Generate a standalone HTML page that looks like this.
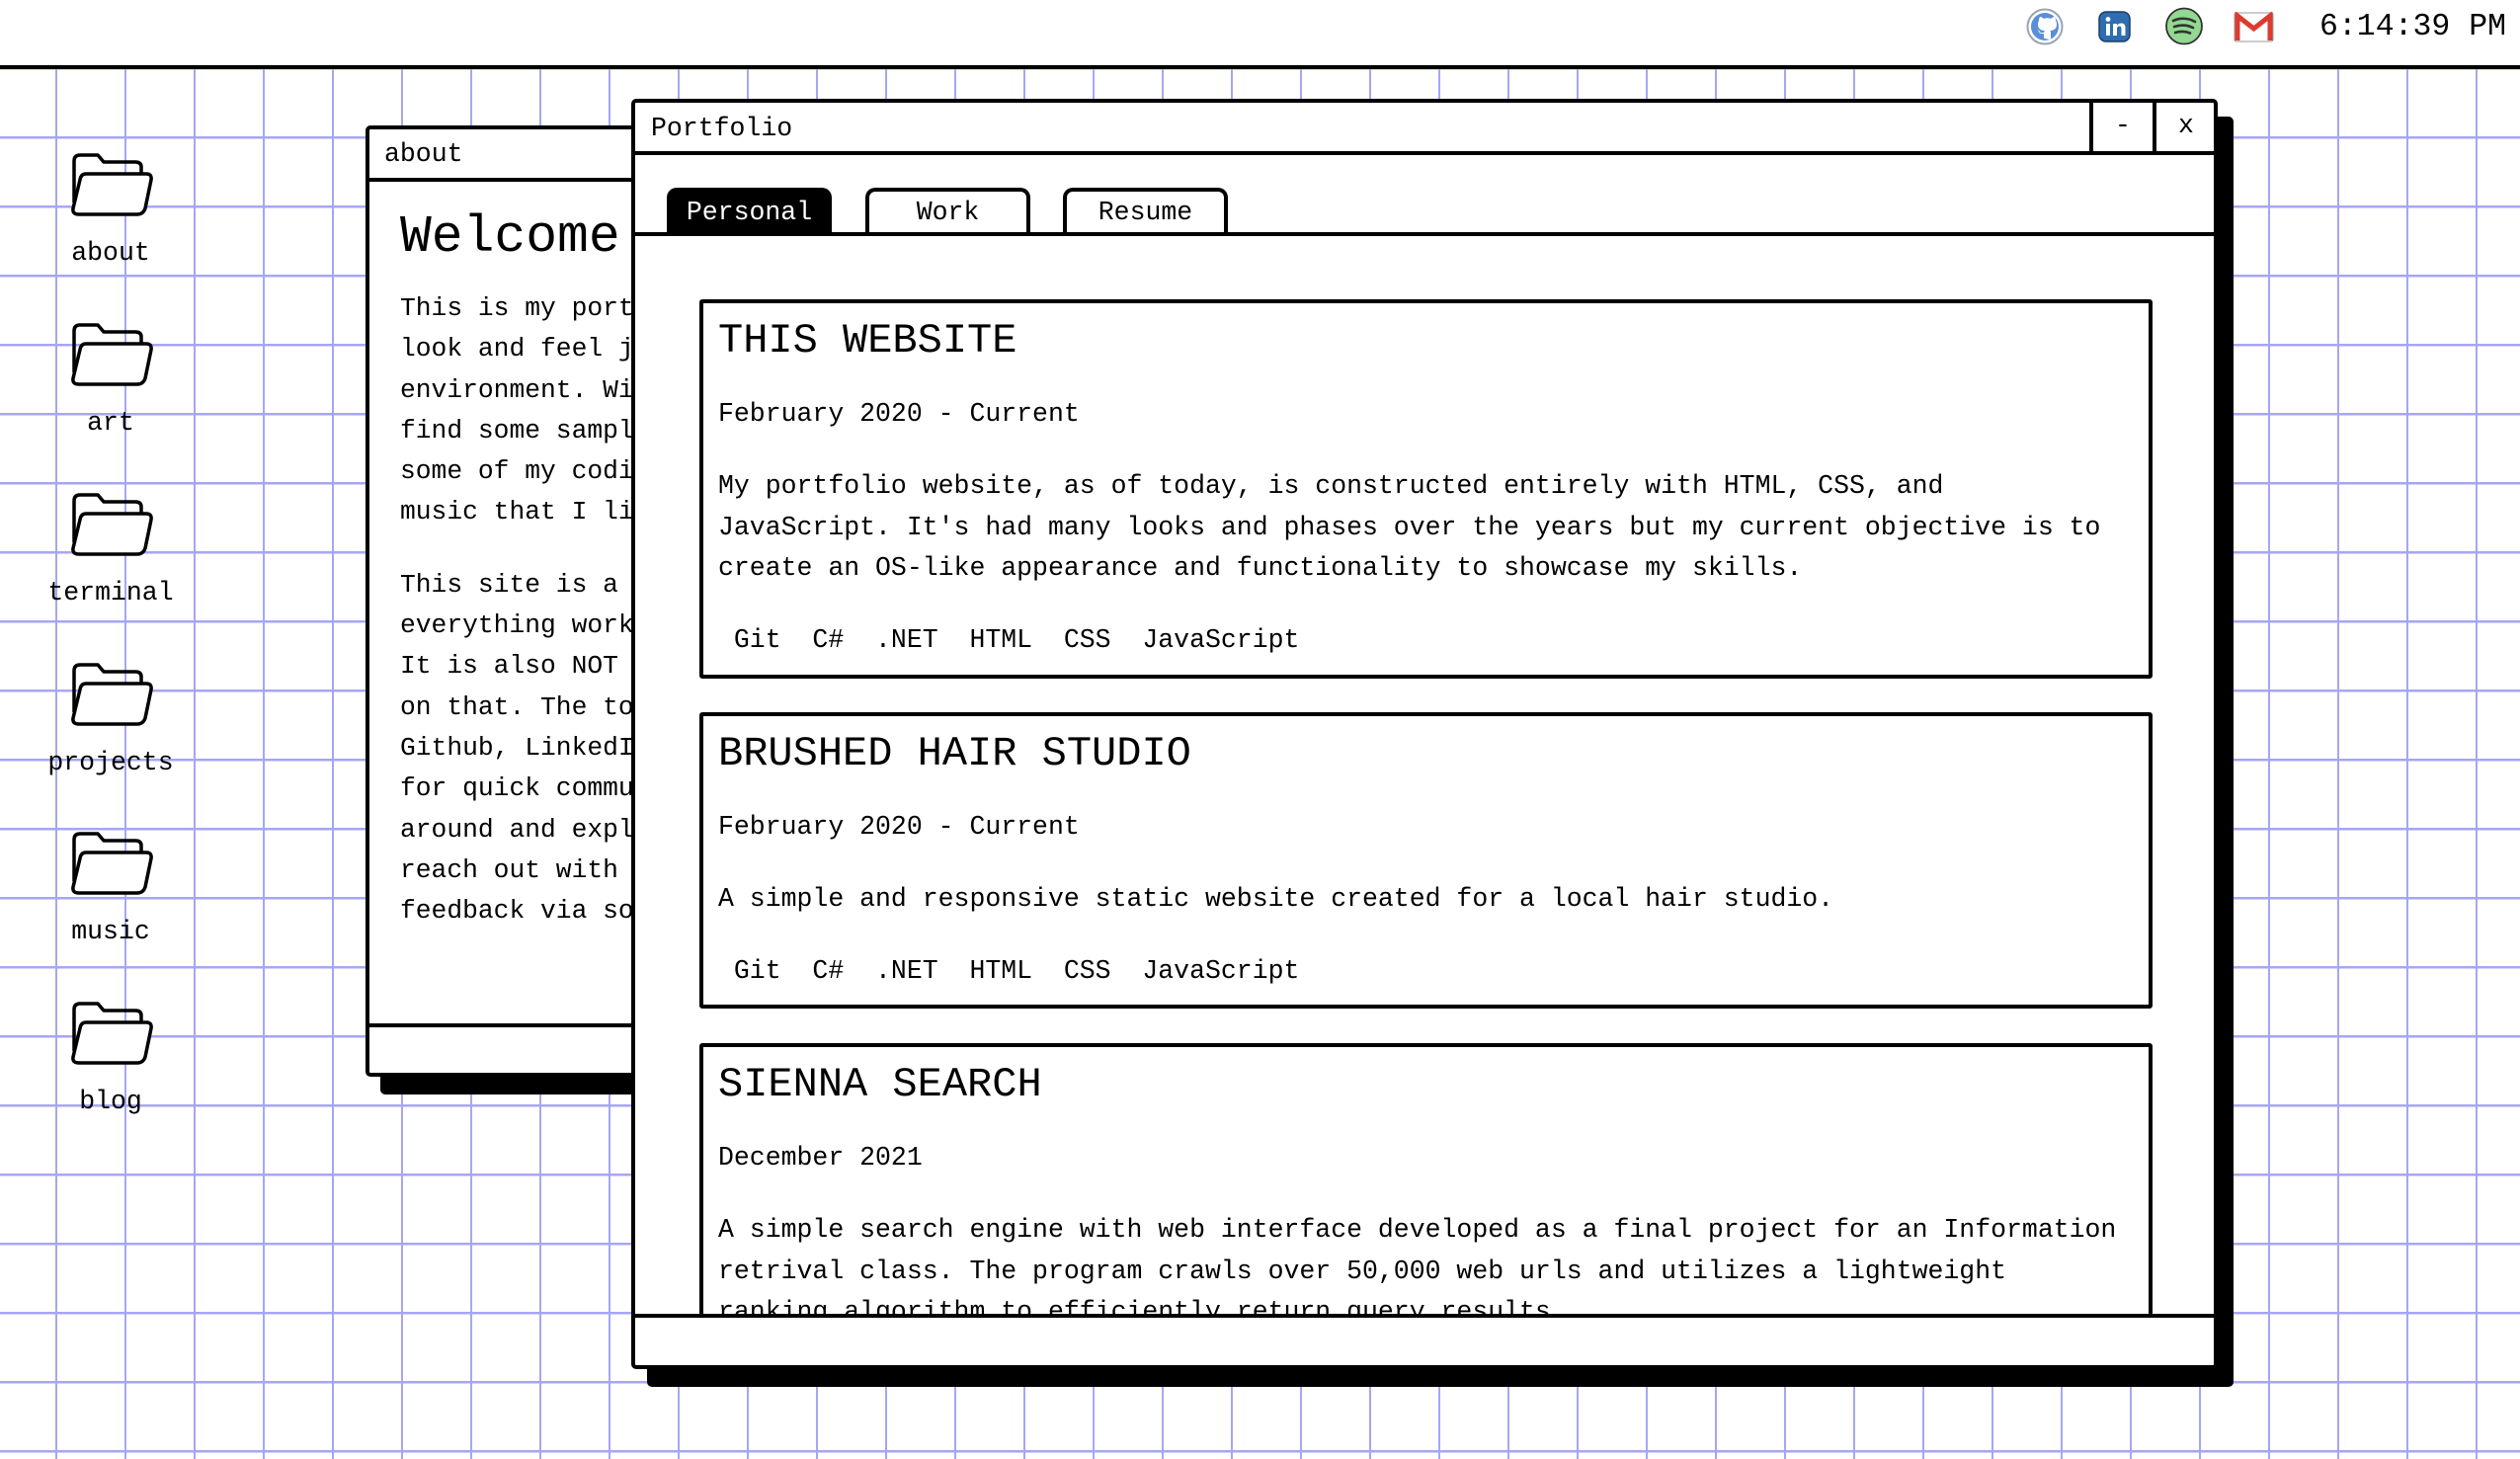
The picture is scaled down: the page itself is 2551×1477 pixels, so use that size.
<!DOCTYPE html>
<html><head><meta charset="utf-8"><style>
*{box-sizing:border-box;margin:0;padding:0}
html,body{width:2551px;height:1477px;overflow:hidden}
body{position:relative;background-color:#fff;
background-image:linear-gradient(to right,#a6a6f5 0,#a6a6f5 2px,transparent 2px),linear-gradient(to bottom,#a6a6f5 0,#a6a6f5 2.5px,transparent 2.5px);
background-size:70px 70px;background-position:56px 0,0 68px;
font-family:"Liberation Mono",monospace;color:#000}
.top{position:absolute;left:0;top:0;width:2551px;height:70px;background:#fff;border-bottom:4px solid #000}
.time{position:absolute;left:2348px;top:8px;font-size:31.5px;line-height:40px}
.ic{position:absolute}
.fold{position:absolute;left:32px;width:160px;text-align:center}
.fold svg{display:block;margin:0 0 0 39px}
.fold span{display:block;font-size:26.5px;line-height:30px;margin-top:22px}
.win{position:absolute;background:#fff;border:4px solid #000;border-radius:5px}
.about{left:370px;top:127px;width:700px;height:963px;box-shadow:15px 18px 0 #000}
.about .tb{height:53px;border-bottom:4px solid #000;font-size:26.5px;line-height:50px;padding-left:15px}
.about h1{position:absolute;left:31px;top:74px;font-size:53px;font-weight:normal;line-height:70px}
.about .tx{position:absolute;left:31px;top:161px;font-size:26.3px;line-height:41.3px;white-space:nowrap}
.about .tx p+p{margin-top:32px}
.about .ft{position:absolute;left:0;right:0;top:905px;border-top:4px solid #000}
.port{left:639px;top:100px;width:1606px;height:1286px;box-shadow:16px 18px 0 #000}
.port .tb{height:53px;border-bottom:4px solid #000;font-size:26.5px;line-height:52px;padding-left:16px;position:relative}
.btn{position:absolute;top:0;width:64px;height:49px;border-left:4px solid #000;text-align:center;font-size:26.5px;line-height:46px}
.tabs{position:absolute;left:0;right:0;top:53px;height:82px;border-bottom:4px solid #000}
.tab{position:absolute;top:33px;width:167px;height:45px;border:4px solid #000;border-bottom:none;border-radius:10px 10px 0 0;text-align:center;font-size:26.5px;line-height:42px;background:#fff}
.tab.on{background:#000;color:#fff}
.content{position:absolute;left:0;right:0;top:135px;height:1091px;overflow:hidden}
.ft2{position:absolute;left:0;right:0;top:1226px;border-top:4px solid #000}
.card{position:absolute;left:65px;width:1471px;border:4px solid #000;border-radius:3px;padding:13px 15px 13px 15px;font-size:26.5px;line-height:41.6px;white-space:nowrap;background:#fff}
.card h2{font-weight:normal;font-size:42px;line-height:50px}
.card .d{margin-top:29px}
.card .p{margin-top:31.6px}
.card .t{margin-top:31px;white-space:pre}
</style></head><body>
<div class="top">
<svg class="ic" style="left:2051px;top:8px" width="38" height="38" viewBox="0 0 38 38"><circle cx="19" cy="19" r="17.5" fill="#fff" stroke="#9aa3b5" stroke-width="2"/><circle cx="19" cy="19" r="14" fill="#5b8ed8"/><path d="M19 31c-1 0-1-1-1-2v-3c-4 1-5-2-5-2-1-2-2-2-2-2 2 0 3 2 3 2 1 2 3 1 4 1 0-1 1-2 1-2-4 0-7-2-7-6 0-1 0-3 1-4 0-1 0-2 1-4 0 0 2 0 4 2 2-1 5-1 7 0 2-2 4-2 4-2 1 2 1 3 1 4 1 1 1 3 1 4 0 4-3 6-7 6 1 0 1 2 1 3v4c0 1 0 2-1 2z" fill="#fff"/></svg>
<svg class="ic" style="left:2124px;top:11px" width="33" height="32" viewBox="0 0 33 32"><rect x="1" y="1" width="31" height="30" rx="7" fill="#2d6db0" stroke="#1d3f66" stroke-width="1.5"/><rect x="8" y="13" width="4" height="12" fill="#fff"/><circle cx="10" cy="8.5" r="2.4" fill="#fff"/><path d="M15 13h4v2c1-2 3-2.5 4.5-2.5 3 0 4 2 4 5V25h-4v-7c0-2-1-2.5-2-2.5s-2.5.5-2.5 2.5v7h-4z" fill="#fff"/></svg>
<svg class="ic" style="left:2191px;top:7px" width="40" height="39" viewBox="0 0 40 39"><circle cx="20" cy="19.5" r="18" fill="#92d890" stroke="#333" stroke-width="1.8"/><path d="M9 14c7-3 15-3 22 1M10 20c6-2 13-2 19 1M11 26c5-1.5 10-1.5 15 .5" stroke="#333" stroke-width="2.6" fill="none" stroke-linecap="round"/></svg>
<svg class="ic" style="left:2261px;top:12px" width="41" height="31" viewBox="0 0 41 31"><rect x="1" y="1" width="39" height="29" rx="2" fill="#fff" stroke="#999" stroke-width="1"/><path d="M4 29V4l16.5 13L37 4v25" fill="none" stroke="#dd3b2f" stroke-width="5"/></svg>
<div class="time">6:14:39 PM</div>
</div>

<div class="fold" style="top:155px"><svg width="84" height="64" viewBox="0 0 84 64"><path d="M4 50V8Q4 2 10 2H28L34 9H66Q72 9 72 14V20" fill="none" stroke="#000" stroke-width="3.5" stroke-linejoin="round"/><path d="M16 21H77Q83 21 82 27L76 56Q74 62 68 62H9Q2 62 3 56L10 27Q11 21 16 21Z" fill="#fff" stroke="#000" stroke-width="3.5" stroke-linejoin="round"/></svg><span>about</span></div>
<div class="fold" style="top:327px"><svg width="84" height="64" viewBox="0 0 84 64"><path d="M4 50V8Q4 2 10 2H28L34 9H66Q72 9 72 14V20" fill="none" stroke="#000" stroke-width="3.5" stroke-linejoin="round"/><path d="M16 21H77Q83 21 82 27L76 56Q74 62 68 62H9Q2 62 3 56L10 27Q11 21 16 21Z" fill="#fff" stroke="#000" stroke-width="3.5" stroke-linejoin="round"/></svg><span>art</span></div>
<div class="fold" style="top:499px"><svg width="84" height="64" viewBox="0 0 84 64"><path d="M4 50V8Q4 2 10 2H28L34 9H66Q72 9 72 14V20" fill="none" stroke="#000" stroke-width="3.5" stroke-linejoin="round"/><path d="M16 21H77Q83 21 82 27L76 56Q74 62 68 62H9Q2 62 3 56L10 27Q11 21 16 21Z" fill="#fff" stroke="#000" stroke-width="3.5" stroke-linejoin="round"/></svg><span>terminal</span></div>
<div class="fold" style="top:671px"><svg width="84" height="64" viewBox="0 0 84 64"><path d="M4 50V8Q4 2 10 2H28L34 9H66Q72 9 72 14V20" fill="none" stroke="#000" stroke-width="3.5" stroke-linejoin="round"/><path d="M16 21H77Q83 21 82 27L76 56Q74 62 68 62H9Q2 62 3 56L10 27Q11 21 16 21Z" fill="#fff" stroke="#000" stroke-width="3.5" stroke-linejoin="round"/></svg><span>projects</span></div>
<div class="fold" style="top:842px"><svg width="84" height="64" viewBox="0 0 84 64"><path d="M4 50V8Q4 2 10 2H28L34 9H66Q72 9 72 14V20" fill="none" stroke="#000" stroke-width="3.5" stroke-linejoin="round"/><path d="M16 21H77Q83 21 82 27L76 56Q74 62 68 62H9Q2 62 3 56L10 27Q11 21 16 21Z" fill="#fff" stroke="#000" stroke-width="3.5" stroke-linejoin="round"/></svg><span>music</span></div>
<div class="fold" style="top:1014px"><svg width="84" height="64" viewBox="0 0 84 64"><path d="M4 50V8Q4 2 10 2H28L34 9H66Q72 9 72 14V20" fill="none" stroke="#000" stroke-width="3.5" stroke-linejoin="round"/><path d="M16 21H77Q83 21 82 27L76 56Q74 62 68 62H9Q2 62 3 56L10 27Q11 21 16 21Z" fill="#fff" stroke="#000" stroke-width="3.5" stroke-linejoin="round"/></svg><span>blog</span></div>

<div class="win about">
<div class="tb">about</div>
<h1>Welcome!</h1>
<div class="tx"><p>This is my portfolio website, made to<br>look and feel just like a desktop<br>environment. Within it, you will<br>find some samples of my art,<br>some of my coding projects, and<br>music that I like.</p><p>This site is a work in progress, so not<br>everything works as intended yet.<br>It is also NOT mobile friendly, working<br>on that. The top right has links to my<br>Github, LinkedIn, Spotify and Email<br>for quick communication. Click<br>around and explore, and feel free to<br>reach out with any questions or<br>feedback via social media.</p></div>
<div class="ft"></div>
</div>

<div class="win port">
<div class="tb">Portfolio<div class="btn" style="left:1472px">-</div><div class="btn" style="left:1536px">x</div></div>
<div class="tabs">
<div class="tab on" style="left:32px">Personal</div>
<div class="tab" style="left:233px">Work</div>
<div class="tab" style="left:433px">Resume</div>
</div>
<div class="content">
<div class="card" style="top:64px"><h2>THIS WEBSITE</h2><div class="d">February 2020 - Current</div><div class="p">My portfolio website, as of today, is constructed entirely with HTML, CSS, and<br>JavaScript. It's had many looks and phases over the years but my current objective is to<br>create an OS-like appearance and functionality to showcase my skills.</div><div class="t"> Git  C#  .NET  HTML  CSS  JavaScript</div></div>
<div class="card" style="top:482px"><h2>BRUSHED HAIR STUDIO</h2><div class="d">February 2020 - Current</div><div class="p">A simple and responsive static website created for a local hair studio.</div><div class="t"> Git  C#  .NET  HTML  CSS  JavaScript</div></div>
<div class="card" style="top:817px"><h2>SIENNA SEARCH</h2><div class="d">December 2021</div><div class="p">A simple search engine with web interface developed as a final project for an Information<br>retrival class. The program crawls over 50,000 web urls and utilizes a lightweight<br>ranking algorithm to efficiently return query results.</div><div class="t"> Python  Flask  HTML  CSS</div></div>
</div>
<div class="ft2"></div>
</div>
</body></html>
